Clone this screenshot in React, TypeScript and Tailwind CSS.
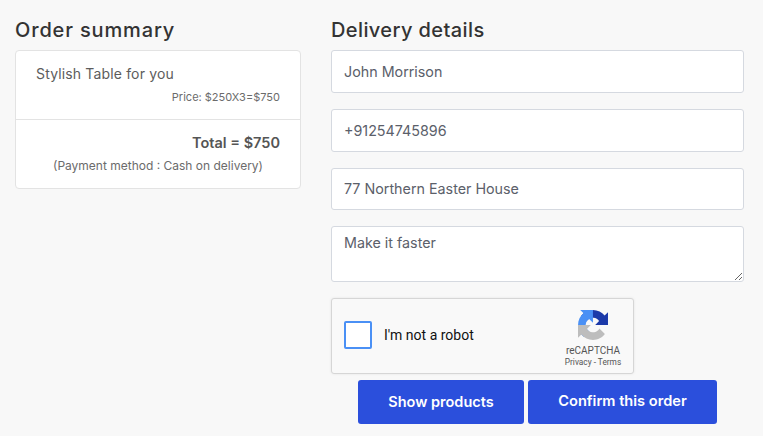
const font = "font-['Inter','Noto_Sans',sans-serif]";

// same arc turned three times for the three colours
const arc =
  "M64 31.955l-.033-1.37V4.687l-7.16 7.16C50.948 4.674 42.033.093 32.05.093c-10.4 0-19.622 4.96-25.458 12.64l11.736 11.86a15.55 15.55 0 0 1 4.754-5.334c2.05-1.6 4.952-2.906 8.968-2.906.485 0 .86.057 1.135.163 4.976.393 9.288 3.14 11.828 7.124l-8.307 8.307c10.522-.04 22.4-.066 27.295.006";

function RecaptchaLogo() {
  return (
    <svg width="30" height="30" viewBox="0 0 64 64" className="block">
      <path d={arc} fill="#1c3aa9" />
      <path d={arc} fill="#4a90f5" transform="rotate(-90 32 32)" />
      <path d={arc} fill="#bdbdbd" transform="rotate(180 32 32)" />
    </svg>
  );
}

function Field({ value, className }: { value: string; className: string }) {
  return (
    <input
      defaultValue={value}
      className={`w-full rounded-[3px] border border-[#d5d9e0] bg-white px-3 pb-px text-[14.3px] text-[#5b606a] outline-none ${className}`}
    />
  );
}

export default function App() {
  return (
    <div className={`${font} flex h-[436px] w-[763px] gap-[30px] overflow-hidden bg-[#f8f8f8] pl-[15px] pt-[17px]`}>
      <div className="w-[286px]">
        <h2 className="h-[33px] text-[20px] leading-[26px] font-medium tracking-[0.85px] text-[#333]">Order summary</h2>
        <div className="h-[139px] rounded-[4px] border border-[#e3e3e3] bg-white">
          <div className="h-[69px] border-b border-[#e3e3e3] pt-[13px] pr-5 pl-5">
            <p className="text-[14px] leading-5 tracking-[0.15px] text-[#5c5c5c]">Stylish Table for you</p>
            <p className="mt-[5px] text-right text-[11px] leading-4 text-[#6b6b6b]">Price: $250X3=$750</p>
          </div>
          <div className="px-5 pt-[13px]">
            <p className="text-right text-[14.5px] leading-5 font-semibold text-[#555]">Total = $750</p>
            <p className="mt-[5px] text-center text-[12px] leading-4 text-[#6b6b6b]">(Payment method : Cash on delivery)</p>
          </div>
        </div>
      </div>
      <div className="w-[413px]">
        <h2 className="h-[33px] text-[20px] leading-[26px] font-medium tracking-[0.4px] text-[#333]">Delivery details</h2>
        <div className="flex flex-col gap-4">
          <Field value="John Morrison" className="h-[43px]" />
          <Field value="+91254745896" className="h-[43px]" />
          <Field value="77 Northern Easter House" className="h-[42px]" />
          <textarea
            defaultValue="Make it faster"
            className="block h-[56px] w-full rounded-[3px] border border-[#d5d9e0] bg-white px-3 py-[6px] text-[14.3px] leading-5 text-[#5b606a] outline-none"
          />
          <div className="flex h-[76px] w-[303px] items-center rounded-[3px] border border-[#d6d6d6] bg-[#f9f9f9] pb-[2px] pl-3 shadow-[0_0_3px_rgba(0,0,0,0.08)]">
            <div className="h-[28px] w-[28px] rounded-[2px] border-2 border-[#4a90f5] bg-white" />
            <span className="ml-3 font-['Roboto',sans-serif] text-[14px] text-[#111]">I'm not a robot</span>
            <div className="ml-auto flex w-[70px] flex-col items-center pt-[8px] pr-[10px] font-['Roboto',sans-serif]">
              <RecaptchaLogo />
              <span className="mt-[5px] text-[10px] leading-3 text-[#555]">reCAPTCHA</span>
              <span className="-mt-px text-[8.3px] leading-3 text-[#555]">Privacy - Terms</span>
            </div>
          </div>
        </div>
        <div className="mt-[6px] ml-[27px] flex gap-1">
          <button className="h-[44px] w-[166px] rounded-[3px] bg-[#2b4fdc] text-[14.5px] font-semibold text-white">Show products</button>
          <button className="h-[44px] w-[189px] rounded-[3px] bg-[#2b4fdc] text-[14.6px] font-semibold text-white">Confirm this order</button>
        </div>
      </div>
    </div>
  );
}
